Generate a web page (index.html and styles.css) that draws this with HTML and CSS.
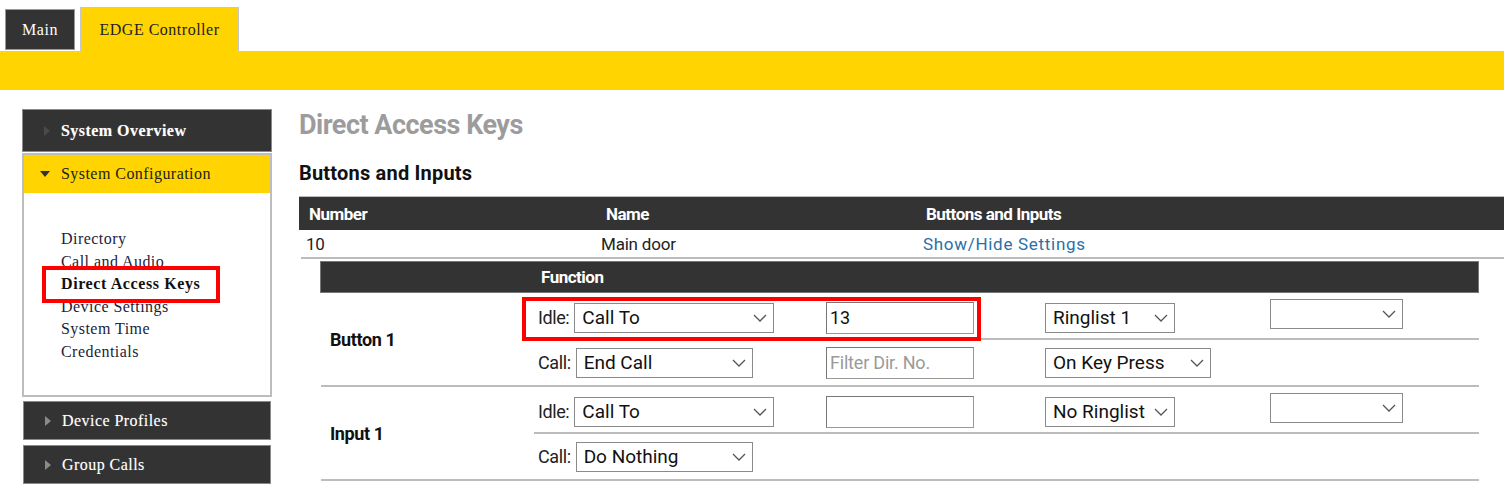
FILE: index.html
```html
<!DOCTYPE html>
<html>
<head>
<meta charset="utf-8">
<link rel="stylesheet" href="styles.css">
</head>
<body>
<div class="tabs">
  <div class="tab tab-main">Main</div>
  <div class="tab tab-active">EDGE Controller</div>
</div>
<div class="bar"></div>
<div class="page">
  <nav class="sidebar">
    <div class="menu dark first-menu"><span class="tri-right"></span>System Overview</div>
    <div class="menu-open">
      <div class="menu yellow"><span class="tri-down"></span>System Configuration</div>
      <ul class="items">
        <li>Directory</li>
        <li>Call and Audio</li>
        <li class="current">Direct Access Keys</li>
        <li>Device Settings</li>
        <li>System Time</li>
        <li>Credentials</li>
      </ul>
    </div>
    <div class="menu dark small"><span class="tri-right light"></span>Device Profiles</div>
    <div class="menu dark small"><span class="tri-right light"></span>Group Calls</div>
  </nav>
  <main class="content">
    <h1 class="title">Direct Access Keys</h1>
    <h2 class="subtitle">Buttons and Inputs</h2>
    <div class="list">
      <div class="list-head">
        <div>Number</div><div>Name</div><div>Buttons and Inputs</div>
      </div>
      <div class="list-row">
        <div>10</div><div>Main door</div><div class="link">Show/Hide Settings</div>
      </div>
    </div>
    <div class="settings">
      <div class="settings-head">
        <div class="sh-label"></div><div class="sh-func">Function</div>
      </div>
      <div class="group">
        <div class="group-label">Button 1</div>
        <div class="subrows">
          <div class="subrow top">
            <div class="cell-func"><span class="lbl">Idle:</span><div class="select w200"><span>Call To</span><svg width="14" height="8" viewBox="0 0 14 8"><path d="M1 1l6 6 6-6" fill="none" stroke="#555" stroke-width="1.3"/></svg></div></div>
            <div class="cell"><input class="field" type="text" value="13"></div>
            <div class="cell"><div class="select w130"><span>Ringlist 1</span><svg width="14" height="8" viewBox="0 0 14 8"><path d="M1 1l6 6 6-6" fill="none" stroke="#555" stroke-width="1.3"/></svg></div></div>
            <div class="cell up"><div class="select w133 empty"><span></span><svg width="14" height="8" viewBox="0 0 14 8"><path d="M1 1l6 6 6-6" fill="none" stroke="#555" stroke-width="1.3"/></svg></div></div>
          </div>
          <div class="subrow">
            <div class="cell-func"><span class="lbl">Call:</span><div class="select w177"><span>End Call</span><svg width="14" height="8" viewBox="0 0 14 8"><path d="M1 1l6 6 6-6" fill="none" stroke="#555" stroke-width="1.3"/></svg></div></div>
            <div class="cell"><input class="field" type="text" placeholder="Filter Dir. No."></div>
            <div class="cell"><div class="select w166"><span>On Key Press</span><svg width="14" height="8" viewBox="0 0 14 8"><path d="M1 1l6 6 6-6" fill="none" stroke="#555" stroke-width="1.3"/></svg></div></div>
            <div class="cell"></div>
          </div>
        </div>
      </div>
      <div class="group">
        <div class="group-label">Input 1</div>
        <div class="subrows">
          <div class="subrow top">
            <div class="cell-func"><span class="lbl">Idle:</span><div class="select w200"><span>Call To</span><svg width="14" height="8" viewBox="0 0 14 8"><path d="M1 1l6 6 6-6" fill="none" stroke="#555" stroke-width="1.3"/></svg></div></div>
            <div class="cell"><input class="field" type="text" value=""></div>
            <div class="cell"><div class="select w130"><span>No Ringlist</span><svg width="14" height="8" viewBox="0 0 14 8"><path d="M1 1l6 6 6-6" fill="none" stroke="#555" stroke-width="1.3"/></svg></div></div>
            <div class="cell up"><div class="select w133 empty"><span></span><svg width="14" height="8" viewBox="0 0 14 8"><path d="M1 1l6 6 6-6" fill="none" stroke="#555" stroke-width="1.3"/></svg></div></div>
          </div>
          <div class="subrow">
            <div class="cell-func"><span class="lbl">Call:</span><div class="select w177"><span>Do Nothing</span><svg width="14" height="8" viewBox="0 0 14 8"><path d="M1 1l6 6 6-6" fill="none" stroke="#555" stroke-width="1.3"/></svg></div></div>
            <div class="cell"></div>
            <div class="cell"></div>
            <div class="cell"></div>
          </div>
        </div>
      </div>
    </div>
  </main>
</div>
<div class="mark mark-nav"></div>
<div class="mark mark-func"></div>
</body>
</html>
```

FILE: styles.css
```css
* { box-sizing: border-box; }
html, body { margin: 0; padding: 0; }
body {
  position: relative;
  width: 1504px;
  height: 484px;
  overflow: hidden;
  background: #fff;
  font-family: Roboto, "Liberation Sans", sans-serif;
  color: #222;
}

/* top tabs */
.tabs {
  display: flex;
  align-items: flex-end;
  gap: 5px;
  height: 51px;
  padding-left: 5px;
}
.tab {
  font-family: "Liberation Serif", serif;
  font-size: 16px;
  letter-spacing: 0.5px;
  display: flex;
  align-items: center;
  justify-content: center;
}
.tab-main {
  width: 70px;
  height: 41px;
  margin-bottom: 1px;
  background: #333;
  color: #fff;
  border: 1px solid #9a9a9a;
}
.tab-active {
  width: 159px;
  height: 44px;
  background: #ffd400;
  color: #222;
  border: 1px solid #c3c6cc;
  border-bottom: none;
}
.bar {
  height: 39px;
  background: #ffd400;
}

/* layout */
.page {
  display: flex;
  padding-top: 19px;
}
.sidebar {
  width: 250px;
  margin-left: 22px;
  display: flex;
  flex-direction: column;
  font-family: "Liberation Serif", serif;
  font-size: 16px;
  letter-spacing: 0.45px;
}
.menu {
  display: flex;
  align-items: center;
  padding-left: 21px;
}
.dark {
  background: #333;
  color: #fff;
  border: 1px solid #8a8a8a;
  text-shadow: 0 0 1px rgba(255,255,255,0.35);
}
.first-menu { height: 43px; font-weight: bold; }
.small {
  height: 39px;
  width: 248px;
  margin-left: 1px;
  margin-top: 4px;
}
.small + .small { margin-top: 5px; }
.tri-right {
  width: 0; height: 0;
  border-top: 5px solid transparent;
  border-bottom: 5px solid transparent;
  border-left: 6px solid #4a4a4a;
  margin-right: 11px;
}
.tri-right.light { border-left-color: #8a8a8a; }
.tri-down {
  width: 0; height: 0;
  border-left: 5px solid transparent;
  border-right: 5px solid transparent;
  border-top: 6px solid #333;
  margin-right: 11px;
  margin-left: -4px;
}
.menu-open {
  margin-top: 1px;
  height: 244px;
  border: 2px solid #bdbdbd;
}
.yellow {
  height: 38px;
  background: #ffd400;
  color: #222;
  padding-left: 20px;
}
.items {
  list-style: none;
  margin: 0;
  padding: 35px 0 0 37px;
  color: #1c1c3c;
  line-height: 22.5px;
}
.items .current { font-weight: bold; color: #111; letter-spacing: 0.6px; }

/* content */
.content {
  flex: 1;
  margin-left: 27px;
}
.title {
  margin: 0;
  font-size: 27px;
  font-weight: bold;
  color: #9c9c9c;
  line-height: 32px;
  letter-spacing: -0.5px;
}
.subtitle {
  margin: 21px 0 0;
  font-size: 20px;
  font-weight: bold;
  color: #111;
  line-height: 23px;
  letter-spacing: 0.2px;
}
.list { margin-top: 11px; }
.list-head, .list-row {
  display: grid;
  grid-template-columns: 297px 320px 1fr;
  align-items: center;
}
.list-head {
  height: 34px;
  background: #333;
  border-top: 1px solid #bbb;
  color: #fff;
  font-weight: bold;
  font-size: 17px;
  letter-spacing: -0.5px;
}
.list-head div { padding-left: 10px; }
.list-row {
  height: 29px;
  margin-left: 2px;
  border-bottom: 2px solid #bcbcbc;
  font-size: 17px;
  letter-spacing: -0.2px;
}
.list-row div { padding-left: 5px; }
.list-row div:nth-child(2) { margin-left: -2px; }
.link { color: #2a6fa6; letter-spacing: 0.7px; }

.settings {
  margin: 2px 25px 0 21px;
}
.settings-head {
  display: flex;
  height: 32px;
  background: #333;
  border: 1px solid #777;
  color: #fff;
  font-weight: bold;
  font-size: 17px;
  letter-spacing: -0.5px;
  align-items: center;
}
.sh-label { width: 220px; }
.group {
  display: flex;
  border-bottom: 2px solid #bcbcbc;
  margin-left: 1px;
}
.group-label {
  width: 213px;
  display: flex;
  align-items: center;
  padding-left: 9px;
  font-weight: bold;
  font-size: 18px;
  letter-spacing: -0.4px;
  color: #111;
}
.subrows { flex: 1; }
.subrow {
  display: grid;
  grid-template-columns: 292px 219px 225px 1fr;
  align-items: center;
  height: 45px;
}
.subrow.top {
  border-bottom: 2px solid #bcbcbc;
  padding-top: 4px;
  height: 47px;
}
.cell-func {
  display: flex;
  align-items: center;
  padding-left: 4px;
}
.lbl {
  font-size: 18px;
  letter-spacing: -0.4px;
  color: #222;
  margin-right: 5px;
}
.select {
  height: 30px;
  border: 1px solid #8a8a8a;
  display: flex;
  align-items: center;
  justify-content: space-between;
  padding: 0 6px 0 7px;
  font-size: 19px;
  letter-spacing: 0;
  color: #111;
  background: #fff;
}
.w200 { width: 200px; }
.w177 { width: 177px; }
.w130 { width: 130px; }
.w166 { width: 166px; }
.w133 { width: 133px; }
.cell.up { margin-top: -7px; }
.field {
  width: 148px;
  height: 32px;
  border: 1px solid #999;
  border-top-color: #777;
  border-left-color: #777;
  padding: 0 3px;
  font-family: Roboto, "Liberation Sans", sans-serif;
  font-size: 18px;
  letter-spacing: -0.2px;
  color: #111;
  outline: none;
}
.field::placeholder { color: #9a9a9a; }

/* annotation marks */
.mark {
  position: absolute;
  border: 4px solid #f00;
  pointer-events: none;
}
.mark-nav { left: 42px; top: 266px; width: 178px; height: 37px; }
.mark-func { left: 522px; top: 297px; width: 459px; height: 44px; }
```
